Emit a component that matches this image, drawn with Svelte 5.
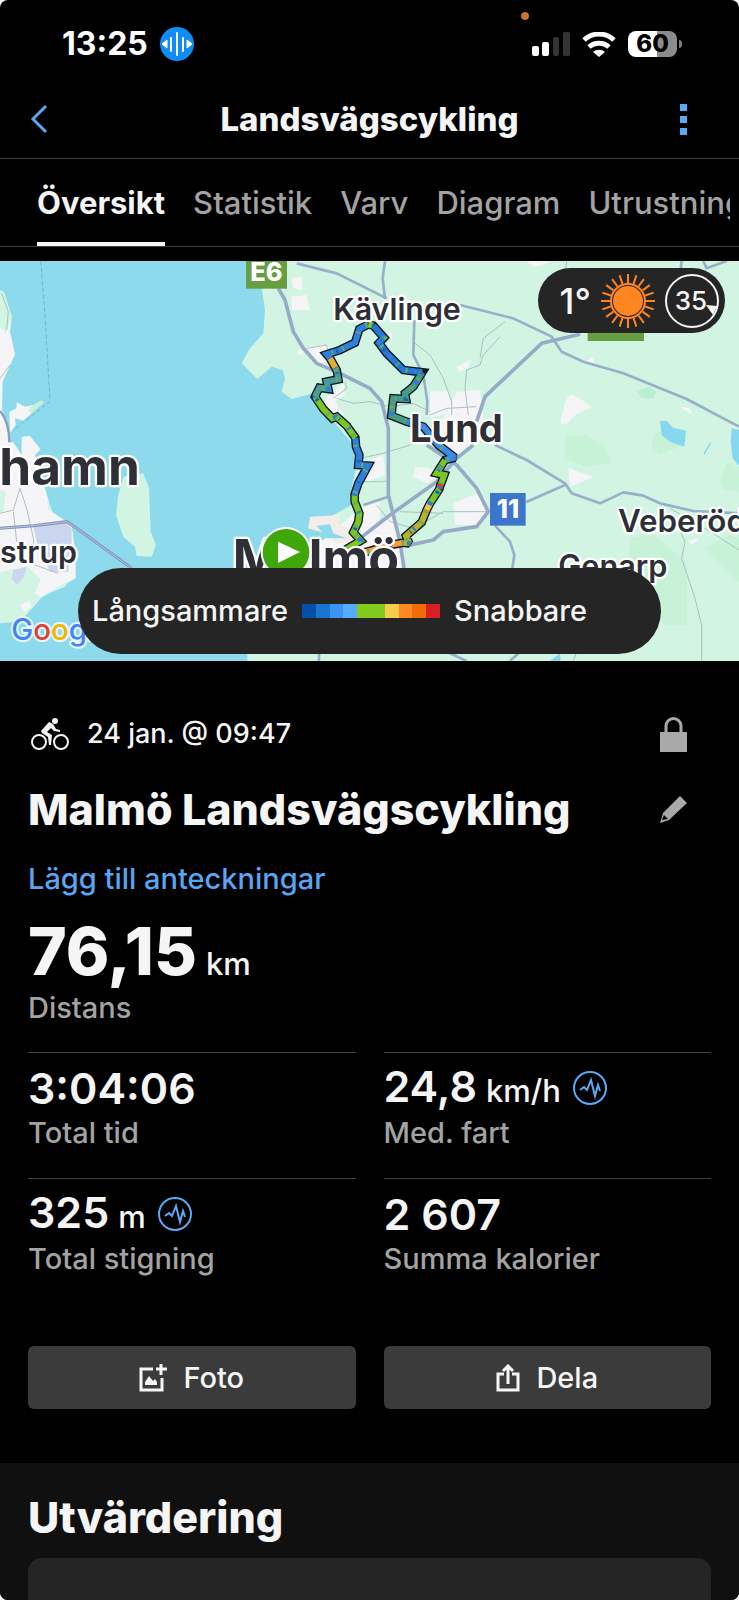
<script lang="ts">
  const tabs = ["Översikt", "Statistik", "Varv", "Diagram", "Utrustning"];
  let activeTab = $state("Översikt");

  const stats = [
    { value: "3:04:06", unit: "", label: "Total tid", insight: false },
    { value: "24,8", unit: "km/h", label: "Med. fart", insight: true },
    { value: "325", unit: "m", label: "Total stigning", insight: true },
    { value: "2 607", unit: "", label: "Summa kalorier", insight: false },
  ];

  const speedColors = [
    "#0350a8", "#1976d0", "#3b93f5", "#55abff", "#82cb1c",
    "#82cb1c", "#f7cb4c", "#ff8a24", "#f06c05", "#d81f22",
  ];

  // ride track, split where the dominant speed colour changes
  const track = [
    { color: "#7cc623", points: "345,885 392,857 370,832 385,800 388,775 374,740 374,718" },
    { color: "#2f80dc", points: "374,718 385,685 414,632 385,630 388,600 378,575 376,548" },
    { color: "#7cc623", points: "376,548 350,512 320,485 307,490 280,462 255,425" },
    { color: "#4a9a9a", points: "255,425 268,398 295,402 290,380 325,373 320,345" },
    { color: "#e6ac35", points: "320,345 300,310" },
    { color: "#2f7fdd", points: "300,310 290,298 330,285 375,263 388,222 415,208" },
    { color: "#7cc623", points: "415,208 430,212" },
    { color: "#2478d6", points: "430,212 462,248 447,264 470,295 520,345 577,352" },
    { color: "#4a9b84", points: "577,352 550,395 525,415 528,432 490,430 484,482 530,500" },
    { color: "#3a8ae6", points: "530,500 580,515 625,570 675,608 645,615" },
    { color: "#7cc623", points: "645,615 620,655 643,660 632,690" },
    { color: "#e23a1c", points: "632,686 628,702" },
    { color: "#7cc623", points: "628,702 600,745" },
    { color: "#ffc14a", points: "600,745 590,765" },
    { color: "#b9b128", points: "590,765 575,802 528,843 538,865 520,863" },
    { color: "#ff9a35", points: "520,863 470,872 420,888 395,893" },
  ];
  const trackLine = track.map((part) => part.points).join(" ");

  const majorRoads = [
    "835,100 855,135 880,230 910,280 950,325 1020,355 1110,400 1145,440 1165,520 1165,720 1180,780 1200,860 1212,940",
    "1430,500 1440,470 1455,425 1625,265 1740,238",
    "1080,850 1170,780 1310,680 1370,610 1420,570",
    "1280,570 1370,630 1430,700 1465,770 1430,815 1330,830 1300,855 1220,872",
  ];
  const roads = [
    "890,25 1010,55 1090,95 1160,130",
    "1155,18 1148,70 1155,130",
    "1380,150 1440,165 1540,190 1655,245 1685,290 1750,320 1870,355 2060,432 2217,515",
    "1243,195 1240,300 1270,360 1282,440 1280,480",
    "1485,570 1580,615 1695,685 1715,715 1800,745 1870,712 1930,722 1980,745 2080,768 2217,775",
    "1577,742 1695,690",
    "1485,812 1530,860 1543,900 1537,940",
    "1090,750 1165,725",
    "2045,18 2040,60",
    "2110,18 2120,40 2180,18",
    "957,1190 957,1218",
    "1350,1195 1400,1218",
    "1530,1218 1560,1190",
  ];
  const minorRoads = [
    "1245,265 1290,300 1330,370 1355,440 1355,480",
    "1500,245 1450,300 1440,330 1400,345 1395,400 1405,480",
    "1010,430 1060,445 1110,440 1170,455 1240,445 1290,470",
    "1080,610 1150,595 1230,570 1260,550",
    "1080,680 1150,680 1170,675",
    "1130,750 1170,800 1240,820 1330,770 1465,770",
    "1200,770 1330,775",
    "1290,480 1340,460 1430,455",
    "1700,18 1698,40",
    "1515,200 1450,250 1440,310",
    "920,280 980,270 985,300",
    "1000,430 1040,400 1035,380",
    "2015,775 2055,860 2045,910 2085,1030 2105,1110 2105,1218",
    "2010,760 2130,830 2217,885",
    "0,775 40,765 60,700 80,760 100,850 105,930 175,955",
    "40,770 50,860",
    "5,115 25,170 20,225",
    "0,370 30,330",
    "1720,1218 1730,1190",
  ];
  const towns = [
    "875,70 905,65 908,105 880,100",
    "875,125 920,120 930,165 875,165",
    "890,295 905,275 910,300",
    "920,275 985,270 985,320 950,325",
    "985,420 1030,385 1035,420 1005,440 1030,480 1000,500 970,450",
    "1290,410 1345,405 1355,470 1290,490",
    "1370,410 1440,405 1450,490 1430,570 1370,610 1290,560 1340,470",
    "1370,335 1410,315 1405,340 1375,350",
    "1245,635 1290,640 1310,665 1280,685 1240,665",
    "1360,745 1440,712 1465,770 1430,810 1365,810",
    "1105,615 1150,600 1155,660 1100,680",
    "1080,760 1140,740 1140,790 1095,840 1180,760 1210,900 1200,960 950,960 940,880",
    "1700,425 1720,418 1775,455 1725,480 1695,510 1680,505",
    "1705,640 1780,665 1710,695",
    "2040,455 2070,460 2078,480",
    "1580,18 1655,18 1620,32 1600,35",
    "1755,320 1778,305 1785,325",
    "2065,855 2100,850 2075,870",
    "1155,230 1175,230 1175,250 1155,245",
  ];
  const woods = [
    "1695,545 1760,540 1810,570 1835,625 1760,635 1695,610",
    "1960,540 2000,520 2050,540 2030,580 1980,597 1955,580",
    "2160,680 2180,620 2217,640 2217,710 2170,705",
    "1890,850 1960,840 2060,920 2060,1110 1990,1110 1960,1000 1890,900",
    "2110,880 2190,840 2217,850 2217,980",
  ];

  const sunRays = Array.from({ length: 20 }, (_, i) => i * 18);
</script>

{#snippet insightIcon()}
  <svg class="insight" viewBox="0 0 34 34" aria-hidden="true">
    <circle cx="17" cy="17" r="16" />
    <path d="M7 19l4-3 3 3 4-10 4 16 3-11 2 6" />
  </svg>
{/snippet}

<div class="screen">
  <div class="status">
    <span class="status__mic"></span>
    <time class="status__time">13:25</time>
    <svg class="status__voice" viewBox="0 0 34 34" aria-hidden="true">
      <circle cx="17" cy="17" r="17" fill="#0f8cf5" />
      <path d="M2 17l5-4v8zM32 17l-5-4v8z" fill="#fff" stroke="#fff" stroke-linejoin="round" />
      <path d="M11 11v13M17 6v22M23 11v13" stroke="#fff" stroke-width="2" stroke-linecap="round" />
    </svg>
    <svg class="status__signal" viewBox="0 0 38 24" aria-hidden="true">
      <rect x="0" y="14" width="7" height="10" rx="2" fill="#fff" />
      <rect x="10" y="10" width="7" height="14" rx="2" fill="#fff" />
      <rect x="21" y="5" width="6" height="19" rx="2" fill="#343434" />
      <rect x="31" y="0" width="7" height="24" rx="2" fill="#343434" />
    </svg>
    <svg class="status__wifi" viewBox="0 0 34 25" aria-hidden="true">
      <path d="M2 8a22 22 0 0 1 30 0M7 15a15 15 0 0 1 20 0" fill="none" stroke="#fff" stroke-width="5" />
      <path d="M11 20a9 9 0 0 1 12 0l-6 5z" fill="#fff" />
    </svg>
    <div class="battery"><span class="battery__level">60</span></div>
  </div>

  <header class="header">
    <button type="button" class="icon-btn" aria-label="Tillbaka">
      <svg width="18" height="30" viewBox="0 0 18 30"><path d="M16 2L3 15l13 13" fill="none" stroke="#5aa5f0" stroke-width="3" /></svg>
    </button>
    <h1 class="header__title">Landsvägscykling</h1>
    <button type="button" class="icon-btn icon-btn--end" aria-label="Mer">
      <svg width="7" height="31" viewBox="0 0 7 31"><path d="M0 0h7v7H0zM0 12h7v7H0zM0 24h7v7H0z" fill="#5ba9f3" /></svg>
    </button>
  </header>

  <nav class="tabs">
    <div class="tabs__scroll">
      {#each tabs as tab}
        <button
          type="button"
          class="tab"
          class:tab--active={tab === activeTab}
          onclick={() => (activeTab = tab)}
        >
          {tab}
        </button>
      {/each}
    </div>
  </nav>

  <div class="map">
    <!-- map drawing uses three units per pixel -->
    <svg class="map__canvas" viewBox="0 18 2217 1200" preserveAspectRatio="xMidYMid slice" role="img" aria-label="Karta">
      <rect y="18" width="2217" height="1200" fill="#8ddaed" />
      <path
        fill="#d1f5e2"
        d="M790 18L785 100 795 165 790 235 750 280 725 325 772 372 815 335 848 345 855 370 845 410 875 432 940 415 965 470 1010 510 1060 570 1068 640 1055 700 1055 750 990 785 930 790 925 820 990 840 1000 865 940 870 900 940 800 1050 742 1150V1218H2217V18Z"
      />
      <path fill="#f5f5f7" d="M0 105L12 112 35 185 30 230 45 298 8 380 6 465 30 540 25 560 0 570Z" />
      <path fill="#d1f5e2" d="M0 105L12 112 35 185 18 235 0 215Z" />
      <path fill="#f5f5f7" d="M28 470L50 460 50 442 75 455 100 450 95 475 70 497 45 490 47 510 30 535Z" />
      <path fill="#c7f0d6" d="M100 450L125 436 132 443 95 475 85 465Z" />
      <path fill="#f5f5f7" d="M65 545L90 543 122 583 105 600 135 700 155 770 215 810 227 900 227 970 165 1005 120 1030 60 1080 0 1105V560L40 562 65 600Z" />
      <path fill="#c9d6ee" d="M100 815L195 803 215 820 215 875 205 950 150 950 110 860Z" />
      <path fill="#d1f5e2" d="M0 705L18 710 10 770 0 772ZM140 730L160 775 145 765ZM0 950L85 935 122 975 105 1015 125 1028 60 1100 0 1105ZM120 1025L210 975 195 995Z" />
      <path fill="#c9d6ee" d="M40 945L80 935 70 970 50 990 35 970Z" />
      <path fill="#f5f5f7" d="M60 1050L90 1035 95 1055 75 1070Z" />
      <path fill="#d1f5e2" d="M370 665L430 655 447 700 452 830 468 870 455 905 410 903 405 875 370 845 348 780 355 720Z" />
      <path fill="none" stroke="#6ab9d2" stroke-width="3" stroke-dasharray="14 6" d="M122 18L135 180 150 440 40 525" />

      {#each woods as points}<polygon {points} fill="#c8f2d8" />{/each}
      <polygon points="1910,410 1945,395 1970,410 1960,432 1925,430" fill="#b8f0d4" />
      {#each towns as points}<polygon {points} fill="#f5f5f7" />{/each}
      <path fill="#f4ece6" d="M930 785L1020 780 1015 810 1080 830 1060 860 1005 865 990 838 925 820Z" />
      <path fill="#8ddaed" d="M950 812L990 808 1000 835 1040 850 980 850Z" />
      <path fill="#85d8ef" d="M1980 498L2000 498 2020 518 2058 527 2053 575 2010 560 1985 540ZM2195 520L2217 525V632L2198 610 2192 560ZM1650 1218L1680 1195 1682 1218Z" />
      <path stroke="#85d8ef" stroke-width="4" d="M2112 598L2132 563" />

      {#each minorRoads as points}
        <polyline {points} fill="none" stroke="#abc0c6" stroke-width="3" />
      {/each}
      {#each roads as points}
        <polyline {points} fill="none" stroke="#97afc8" stroke-width="8" stroke-linejoin="round" />
      {/each}
      {#each majorRoads as points}
        <polyline {points} fill="none" stroke="#97abc9" stroke-width="11" stroke-linejoin="round" />
      {/each}
      <path fill="none" stroke="#8593bb" stroke-width="9" d="M0 820L100 812 200 800 230 820 395 940" />
      <path fill="none" stroke="#b8c5e2" stroke-width="3" d="M0 820L100 812 200 800 230 820 395 940" />
      <path fill="none" stroke="#8c9cbc" stroke-width="7" d="M0 468Q28 500 28 562" />

      <rect x="738" y="18" width="123" height="83" fill="#669f41" />
      <text class="road-sign" x="799" y="77" font-size="76">E6</text>
      <rect x="1763" y="200" width="169" height="58" fill="#669f41" />
      <rect x="1470" y="714" width="107" height="98" fill="#3c76cc" />
      <text class="road-sign" x="1524" y="789" font-size="76">11</text>

      <g transform="translate(690 0)" fill="none" stroke-miterlimit="2">
        <polyline points={trackLine} stroke="#0b1722" stroke-width="26" />
        {#each track as part}
          <polyline points={part.points} stroke={part.color} stroke-width="18" />
        {/each}
        <polyline points={trackLine} stroke="#2c80d8" stroke-width="14" stroke-dasharray="7 47 12 83" />
        <polyline points={trackLine} stroke="#5fae63" stroke-width="16" stroke-dasharray="6 66 5 29" />
        <polyline points={trackLine} stroke="#1565bd" stroke-width="12" stroke-dasharray="4 92 8 140" />
      </g>

      <g class="place">
        <text x="1000" y="195" font-size="91">Kävlinge</text>
        <text x="1854" y="830" font-size="94">Veberöd</text>
        <text x="1675" y="966" font-size="92">Genarp</text>
        <text x="0" y="925" font-size="91">strup</text>
      </g>
      <g class="place place--city">
        <text x="1230" y="561" font-size="114">Lund</text>
        <text x="-2" y="690" font-size="154">hamn</text>
        <text x="698" y="963" font-size="151">Malmö</text>
      </g>

      <circle cx="858" cy="892" r="76" fill="#fff" />
      <circle cx="858" cy="892" r="70" fill="#3fa70a" />
      <path d="M834 860L900 891 834 924Z" fill="#fff" />

      <text class="google" x="34" y="1156" font-size="88"><tspan fill="#4285f4">G</tspan><tspan fill="#dc4437">o</tspan><tspan fill="#f4b400">o</tspan><tspan fill="#4285f4">g</tspan><tspan fill="#0f9d58">l</tspan><tspan fill="#dc4437">e</tspan></text>
    </svg>

    <div class="weather">
      <span class="weather__temp">1°</span>
      <svg class="weather__sun" viewBox="-27 -27 54 54" aria-hidden="true">
        <circle r="15" fill="#ff8520" />
        <circle r="17" fill="none" stroke="#ff8520" stroke-width="2" />
        {#each sunRays as angle}
          <path d="M0 -18V-27" stroke="#ff8520" stroke-width="2" transform="rotate({angle})" />
        {/each}
      </svg>
      <svg class="weather__wind" viewBox="0 0 54 54" role="img" aria-label="Vind 35">
        <circle cx="27" cy="27" r="26" fill="none" stroke="#f5f5f5" stroke-width="2" />
        <path d="M41 31l11 1-4 9z" fill="#f5f5f5" />
        <text x="26" y="36">35</text>
      </svg>
    </div>

    <div class="legend">
      <span>Långsammare</span>
      <div class="legend__bar">
        {#each speedColors as color}
          <span style="background: {color}"></span>
        {/each}
      </div>
      <span>Snabbare</span>
    </div>
  </div>

  <main class="activity">
    <div class="meta">
      <svg class="meta__bike" viewBox="0 0 38 34" aria-hidden="true">
        <g fill="none" stroke="#f5f5f5">
          <circle cx="8" cy="25" r="7" stroke-width="2" />
          <circle cx="30" cy="25" r="7" stroke-width="2" />
        </g>
        <circle cx="24" cy="4" r="3" fill="#f5f5f5" />
        <path d="M18 5l4 2 3 5 4 1v2l-6-1-3-3-4 4 5 3-1 10h-2l-1-8-6-4-1-2z" fill="#f5f5f5" />
      </svg>
      <span class="meta__date">24 jan. @ 09:47</span>
      <button type="button" class="icon-btn icon-btn--end" aria-label="Sekretess">
        <svg width="27" height="35" viewBox="0 0 27 35"><path d="M0 15h27v20H0z" fill="#a9a9a9" /><path d="M6 16V9a7 7 0 0 1 15 0v7" fill="none" stroke="#a9a9a9" stroke-width="3" /></svg>
      </button>
    </div>

    <div class="name">
      <h2>Malmö Landsvägscykling</h2>
      <button type="button" class="icon-btn icon-btn--end" aria-label="Redigera namn">
        <svg width="27" height="27" viewBox="0 0 27 27"><path fill="#a9a9a9" fill-rule="evenodd" d="M20 0l7 7L9 24 0 27 3 17zM4 19l-2 5 6-1z" /></svg>
      </button>
    </div>

    <a class="notes" href="#anteckningar">Lägg till anteckningar</a>

    <div class="distance">
      <p class="value value--large">76,15 <span class="unit">km</span></p>
      <p class="label">Distans</p>
    </div>

    <div class="stats">
      {#each stats as stat}
        <div class="stat">
          <div class="stat__row">
            <p class="value">{stat.value} {#if stat.unit}<span class="unit">{stat.unit}</span>{/if}</p>
            {#if stat.insight}{@render insightIcon()}{/if}
          </div>
          <p class="label">{stat.label}</p>
        </div>
      {/each}
    </div>

    <div class="actions">
      <button type="button" class="btn">
        <svg width="28" height="28" viewBox="0 0 28 28" aria-hidden="true">
          <path d="M14 5H2v21h21V14" fill="none" stroke="#f5f5f5" stroke-width="3" />
          <path d="M22 0v11M17 5h11" stroke="#f5f5f5" stroke-width="3" />
          <path d="M6 21v-3l4-6 4 5 2-2 2 3v3z" fill="#f5f5f5" />
        </svg>
        Foto
      </button>
      <button type="button" class="btn">
        <svg width="24" height="28" viewBox="0 0 24 28" aria-hidden="true">
          <path d="M8 10H2v16h20V10h-6M12 20V3M7 7l5-5 5 5" fill="none" stroke="#f5f5f5" stroke-width="3" />
        </svg>
        Dela
      </button>
    </div>
  </main>

  <section class="evaluation">
    <h2>Utvärdering</h2>
    <div class="card"></div>
  </section>
</div>

<style>
  :global(body) {
    margin: 0;
    background: #fff;
  }

  .screen {
    display: flex;
    flex-direction: column;
    min-height: 100vh;
    overflow: hidden;
    background: #000;
    border-radius: 8px;
    color: #f5f5f5;
    font-family: Inter, "Liberation Sans", sans-serif;
    font-size: 29px;
    font-weight: 500;
    line-height: 36px;
  }

  h1,
  h2,
  p {
    margin: 0;
  }

  button {
    font: inherit;
    color: inherit;
    cursor: pointer;
  }

  svg {
    display: block;
    flex: none;
  }

  /* status bar */
  .status {
    position: relative;
    display: flex;
    align-items: center;
    height: 80px;
    padding: 8px 62px 0;
    box-sizing: border-box;
  }

  .status__mic {
    position: absolute;
    top: 12px;
    right: 210px;
    width: 8px;
    height: 8px;
    border-radius: 50%;
    background: #c87530;
  }

  .status__time {
    color: #fff;
    font-size: 32px;
    font-weight: 700;
  }

  .status__voice {
    width: 34px;
    margin: 0 auto 0 12px;
  }

  .status__signal {
    width: 38px;
  }

  .status__wifi {
    width: 34px;
    margin: 0 12px;
  }

  .battery {
    position: relative;
    width: 49px;
    height: 26px;
    border-radius: 8px;
    background: linear-gradient(to right, #fff 60%, #8c8c8c 60%);
    color: #000;
    text-align: center;
  }

  .battery::after {
    content: "";
    position: absolute;
    top: 9px;
    right: -5px;
    width: 3px;
    height: 8px;
    border-radius: 0 4px 4px 0;
    background: #7c7c7c;
  }

  .battery__level {
    display: block;
    font-size: 24px;
    font-weight: 800;
    line-height: 26px;
  }

  /* header */
  .header {
    display: grid;
    grid-template-columns: 1fr auto 1fr;
    align-items: center;
    height: 78px;
    padding: 0 52px 0 30px;
    border-bottom: 1px solid #424242;
  }

  .header__title {
    margin-left: 22px;
    font-size: 33px;
    font-weight: 800;
  }

  .icon-btn {
    display: flex;
    padding: 0;
    border: 0;
    background: none;
  }

  .icon-btn--end {
    margin-left: auto;
  }

  /* tabs */
  .tabs {
    border-bottom: 1px solid #424242;
  }

  .tabs__scroll {
    display: flex;
    gap: 28px;
    height: 87px;
    margin-right: 9px;
    padding-left: 37px;
    overflow: hidden;
  }

  .tab {
    flex: none;
    padding: 4px 0 0;
    border: 0;
    border-bottom: 4px solid transparent;
    background: none;
    color: #a3a3a3;
    font-size: 31px;
  }

  .tab--active {
    border-color: #f5f5f5;
    color: #f5f5f5;
    font-weight: 700;
  }

  /* map */
  .map {
    position: relative;
    height: 400px;
    margin-top: 14px;
  }

  .map__canvas {
    width: 100%;
    height: 100%;
  }

  .place {
    fill: #2f3037;
    stroke: #fff;
    stroke-width: 14px;
    stroke-linejoin: round;
    paint-order: stroke;
    font-weight: 600;
  }

  .place--city {
    font-weight: 700;
  }

  .road-sign {
    fill: #fff;
    font-weight: 800;
    text-anchor: middle;
  }

  .google {
    stroke: #e8f6fb;
    stroke-width: 12px;
    stroke-linejoin: round;
    paint-order: stroke;
  }

  .weather {
    position: absolute;
    top: 7px;
    right: 14px;
    display: flex;
    align-items: center;
    height: 65px;
    padding: 0 6px 0 22px;
    border-radius: 33px;
    background: #252525;
  }

  .weather__temp {
    font-size: 36px;
  }

  .weather__sun {
    width: 54px;
    margin: 0 10px;
  }

  .weather__wind {
    width: 54px;
  }

  .weather__wind text {
    fill: #f5f5f5;
    font-size: 26px;
    text-anchor: middle;
  }

  .legend {
    position: absolute;
    right: 78px;
    bottom: 7px;
    left: 78px;
    display: flex;
    align-items: center;
    gap: 14px;
    height: 86px;
    padding: 0 14px;
    border-radius: 43px;
    box-sizing: border-box;
    background: #252525;
  }

  .legend__bar {
    display: flex;
    width: 138px;
    height: 14px;
  }

  .legend__bar span {
    flex: 1;
  }

  /* activity summary */
  .activity {
    padding: 53px 28px 54px;
  }

  .meta,
  .name {
    display: flex;
    align-items: center;
    padding-right: 24px;
  }

  .meta {
    height: 40px;
  }

  .meta__bike {
    width: 38px;
    margin: 0 18px 0 3px;
  }

  .meta__date {
    font-size: 27px;
  }

  .name {
    margin-top: 29px;
  }

  h2 {
    font-size: 43px;
    font-weight: 800;
    line-height: 52px;
  }

  .notes {
    display: block;
    margin-top: 26px;
    color: #5aa5f0;
    text-decoration: none;
  }

  .distance {
    margin-top: 28px;
  }

  .value {
    display: flex;
    align-items: baseline;
    gap: 9px;
    font-size: 43px;
    font-weight: 600;
    line-height: 52px;
  }

  .value--large {
    font-size: 66px;
    font-weight: 800;
  }

  .unit {
    font-size: 31px;
    font-weight: 500;
  }

  .label {
    color: #a3a3a3;
  }

  .stats {
    display: grid;
    grid-template-columns: 1fr 1fr;
    column-gap: 28px;
    margin-top: 26px;
  }

  .stat {
    height: 125px;
    border-top: 1px solid #424242;
  }

  .stat__row {
    display: flex;
    align-items: center;
    gap: 12px;
    height: 54px;
    padding-top: 8px;
  }

  .insight {
    width: 34px;
    fill: none;
    stroke: #5ba9f3;
    stroke-width: 2px;
  }

  .actions {
    display: grid;
    grid-template-columns: 1fr 1fr;
    gap: 28px;
    margin-top: 42px;
  }

  .btn {
    display: flex;
    align-items: center;
    justify-content: center;
    gap: 16px;
    height: 63px;
    border: 0;
    border-radius: 6px;
    background: #3b3b3b;
  }

  /* evaluation */
  .evaluation {
    display: flex;
    flex: 1;
    flex-direction: column;
    padding: 28px 28px 0;
    background: #101010;
  }

  .card {
    flex: 1;
    min-height: 42px;
    margin-top: 15px;
    border-radius: 14px 14px 0 0;
    background: #252525;
  }
</style>
